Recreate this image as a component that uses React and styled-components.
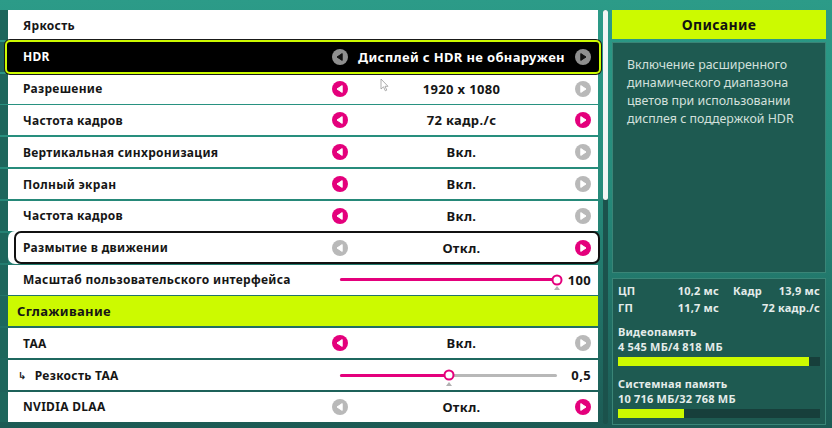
import React from 'react';
import styled, { createGlobalStyle } from 'styled-components';

const colors = {
    teal_top: '#2c9b88',
    teal_bottom: '#1c5a54',
    strip: '#1d665c',
    panel: '#1e5a51',
    panel_border: '#3a8577',
    lime: '#ccfa00',
    pink: '#e4007c',
    gray_arrow: '#b9b9b9',
    dark_arrow: '#8f8f8f',
    text: '#161616',
    light_text: '#d3e0dc',
    stat_text: '#e4ecea',
    bar_track: '#173f3b',
};

const GlobalStyle = createGlobalStyle`
    html, body {
        margin: 0;
        padding: 0;
        width: 832px;
        height: 428px;
        overflow: hidden;
    }
    body {
        font-family: "Noto Sans", "Open Sans", sans-serif;
        background: linear-gradient(180deg, ${colors.teal_top} 0%, #268a7a 45%, ${colors.teal_bottom} 100%);
    }
`;

const Screen = styled.div`
    position: relative;
    width: 832px;
    height: 428px;
    box-sizing: border-box;
    padding-top: 10px;
    display: flex;
    align-items: flex-start;
`;

const List = styled.div`
    width: 598px;
    display: flex;
    flex-direction: column;
    gap: 1.83px;
`;

const Row = styled.div`
    display: flex;
    height: 30px;
`;

const Stub = styled.div`
    width: 8px;
    flex: none;
    background: ${colors.strip};
`;

const cellStyles = {
    normal: `
        background: #fff;
        padding: 0 7px 0 15px;
    `,
    header: `
        background: ${colors.lime};
        padding: 0 7px 0 9px;
    `,
    selected: `
        background: #000;
        color: #fff;
        border: 2px solid ${colors.lime};
        border-radius: 5px;
        box-shadow: 0 0 0 1px #1a1a1a;
        margin: -2px -3px -2px -3px;
        padding: 0 8px 0 16px;
        position: relative;
        z-index: 1;
    `,
    focused: `
        background: #fff;
        border: 2px solid #111;
        border-radius: 7px;
        box-shadow: -6px 0 0 0 #fff;
        margin: -1.5px -2px -1.5px 6px;
        padding: 0 7px 0 7px;
        position: relative;
        z-index: 1;
    `,
};

const Cell = styled.div`
    flex: 1;
    box-sizing: border-box;
    display: flex;
    align-items: center;
    color: ${colors.text};
    ${(p) => cellStyles[p.$variant || 'normal']}
`;

const Label = styled.div`
    flex: 1;
    font-size: ${(p) => (p.$big ? 13 : 12)}px;
    font-weight: 700;
    letter-spacing: ${(p) => (p.$big ? 0.35 : 0.3)}px;
    white-space: nowrap;
    display: flex;
    align-items: center;
`;

const SubArrow = styled.span`
    font-family: "DejaVu Sans", sans-serif;
    font-size: 10px;
    font-weight: 700;
    margin: 0 8px 0 -5px;
`;

const Control = styled.div`
    width: 259px;
    display: flex;
    align-items: center;
`;

const Value = styled.div`
    flex: 1;
    text-align: center;
    font-size: 13px;
    font-weight: 700;
    letter-spacing: 0.35px;
    white-space: nowrap;
`;

const ArrowSvg = styled.svg`
    width: 16px;
    height: 16px;
    flex: none;
    display: block;
`;

const Arrow = ({ dir, tone }) => {
    const fill = tone === 'pink' ? colors.pink : tone === 'dark' ? colors.dark_arrow : colors.gray_arrow;
    const tri = tone === 'dark' ? '#111' : '#fff';
    const d = dir === 'left' ? 'M10.2 4.6 L10.2 11.4 L5 8 Z' : 'M5.8 4.6 L5.8 11.4 L11 8 Z';
    return (
        <ArrowSvg viewBox="0 0 16 16">
            <circle cx="8" cy="8" r="8" fill={fill} />
            <path d={d} fill={tri} stroke={tri} strokeWidth="1" strokeLinejoin="round" />
        </ArrowSvg>
    );
};

const SliderBox = styled.div`
    width: 259px;
    display: flex;
    align-items: center;
    padding-left: 8px;
    box-sizing: border-box;
`;

const Track = styled.div`
    position: relative;
    width: 217px;
    height: 3px;
    border-radius: 2px;
    background: #b8b8b8;
`;

const TrackFill = styled.div`
    height: 100%;
    border-radius: 2px;
    background: ${colors.pink};
`;

const Thumb = styled.div`
    position: absolute;
    top: 50%;
    width: 11px;
    height: 11px;
    box-sizing: border-box;
    border-radius: 50%;
    border: 2.5px solid ${colors.pink};
    background: #fff;
    transform: translate(-50%, -50%);
`;

const Tick = styled.div`
    position: absolute;
    top: 8px;
    width: 0;
    height: 0;
    border-left: 3px solid transparent;
    border-right: 3px solid transparent;
    border-bottom: 4px solid #b0b0b0;
    transform: translateX(-50%);
`;

const SliderValue = styled.div`
    flex: 1;
    text-align: right;
    font-size: 13px;
    font-weight: 700;
    letter-spacing: 0.35px;
`;

const Slider = ({ pct, value }) => (
    <SliderBox>
        <Track>
            <TrackFill style={{ width: `${pct}%` }} />
            <Tick style={{ left: `${pct}%` }} />
            <Thumb style={{ left: `${pct}%` }} />
        </Track>
        <SliderValue>{value}</SliderValue>
    </SliderBox>
);

const Gutter = styled.div`
    width: 14px;
    height: 414px;
    display: flex;
    justify-content: center;
`;

const ScrollTrack = styled.div`
    width: 5px;
    height: 100%;
    border-radius: 3px;
    background: #1b524c;
`;

const ScrollThumb = styled.div`
    height: 190px;
    border-radius: 3px;
    background: #f2f5f4;
`;

const Side = styled.div`
    width: 214px;
    display: flex;
    flex-direction: column;
`;

const DescHeader = styled.div`
    height: 29px;
    background: ${colors.lime};
    display: flex;
    align-items: center;
    justify-content: center;
    font-size: 14px;
    font-weight: 700;
    color: #111;
    letter-spacing: 0.3px;
`;

const Panel = styled.div`
    box-sizing: border-box;
    background: ${colors.panel};
    border: 1px solid ${colors.panel_border};
`;

const DescBody = styled(Panel)`
    margin-top: 3px;
    height: 231px;
    padding: 13px 8px 0 14px;
    color: ${colors.light_text};
    font-size: 12.4px;
    line-height: 18px;
`;

const Stats = styled(Panel)`
    margin-top: 5px;
    height: 147px;
    padding: 3px 5px 0 5px;
    color: ${colors.stat_text};
    font-size: 11px;
    font-weight: 700;
    letter-spacing: 0.2px;
`;

const StatGrid = styled.div`
    display: grid;
    grid-template-columns: 101px 87px;
    column-gap: 14px;
    line-height: 17px;
`;

const StatPair = styled.div`
    display: flex;
    justify-content: space-between;
    white-space: nowrap;
`;

const MemBlock = styled.div`
    margin-top: ${(p) => p.$top}px;
    line-height: 15px;
`;

const Bar = styled.div`
    margin-top: 3px;
    height: 9px;
    width: 202px;
    background: ${colors.bar_track};
`;

const BarFill = styled.div`
    height: 100%;
    background: ${colors.lime};
`;

const Cursor = styled.svg`
    position: absolute;
    left: 380px;
    top: 78px;
    width: 9px;
    height: 14px;
`;

const Option = ({ label, value, left, right, variant }) => (
    <Row>
        <Stub />
        <Cell $variant={variant}>
            <Label>{label}</Label>
            <Control>
                <Arrow dir="left" tone={left} />
                <Value>{value}</Value>
                <Arrow dir="right" tone={right} />
            </Control>
        </Cell>
    </Row>
);

const App = () => {
    return (
        <>
            <GlobalStyle />
            <Screen>
                <List>
                    <Row>
                        <Stub />
                        <Cell>
                            <Label>Яркость</Label>
                        </Cell>
                    </Row>
                    <Option label="HDR" value="Дисплей с HDR не обнаружен" left="dark" right="dark" variant="selected" />
                    <Option label="Разрешение" value="1920 x 1080" left="pink" right="gray" />
                    <Option label="Частота кадров" value="72 кадр./с" left="pink" right="pink" />
                    <Option label="Вертикальная синхронизация" value="Вкл." left="pink" right="gray" />
                    <Option label="Полный экран" value="Вкл." left="pink" right="gray" />
                    <Option label="Частота кадров" value="Вкл." left="pink" right="gray" />
                    <Option label="Размытие в движении" value="Откл." left="gray" right="pink" variant="focused" />
                    <Row>
                        <Stub />
                        <Cell>
                            <Label>Масштаб пользовательского интерфейса</Label>
                            <Slider pct={100} value="100" />
                        </Cell>
                    </Row>
                    <Row>
                        <Stub />
                        <Cell $variant="header">
                            <Label $big>Сглаживание</Label>
                        </Cell>
                    </Row>
                    <Option label="TAA" value="Вкл." left="pink" right="gray" />
                    <Row>
                        <Stub />
                        <Cell>
                            <Label>
                                <SubArrow>↳</SubArrow>Резкость TAA
                            </Label>
                            <Slider pct={50} value="0,5" />
                        </Cell>
                    </Row>
                    <Option label="NVIDIA DLAA" value="Откл." left="gray" right="pink" />
                </List>
                <Gutter>
                    <ScrollTrack>
                        <ScrollThumb />
                    </ScrollTrack>
                </Gutter>
                <Side>
                    <DescHeader>Описание</DescHeader>
                    <DescBody>
                        Включение расширенного динамического диапазона цветов при использовании дисплея с поддержкой HDR
                    </DescBody>
                    <Stats>
                        <StatGrid>
                            <StatPair><span>ЦП</span><span>10,2 мс</span></StatPair>
                            <StatPair><span>Кадр</span><span>13,9 мс</span></StatPair>
                            <StatPair><span>ГП</span><span>11,7 мс</span></StatPair>
                            <StatPair><span></span><span>72 кадр./с</span></StatPair>
                        </StatGrid>
                        <MemBlock $top={8}>
                            <div>Видеопамять</div>
                            <div>4 545 МБ/4 818 МБ</div>
                            <Bar><BarFill style={{ width: `${(4545 / 4818) * 100}%` }} /></Bar>
                        </MemBlock>
                        <MemBlock $top={10}>
                            <div>Системная память</div>
                            <div>10 716 МБ/32 768 МБ</div>
                            <Bar><BarFill style={{ width: `${(10716 / 32768) * 100}%` }} /></Bar>
                        </MemBlock>
                    </Stats>
                </Side>
                <Cursor viewBox="0 0 9 14">
                    <path d="M1 1 L1 11 L3.5 8.8 L5.3 12.8 L6.8 12.1 L5 8.3 L8 8.3 Z" fill="#fff" stroke="#999" strokeWidth="0.8" />
                </Cursor>
            </Screen>
        </>
    );
};

export default App;
